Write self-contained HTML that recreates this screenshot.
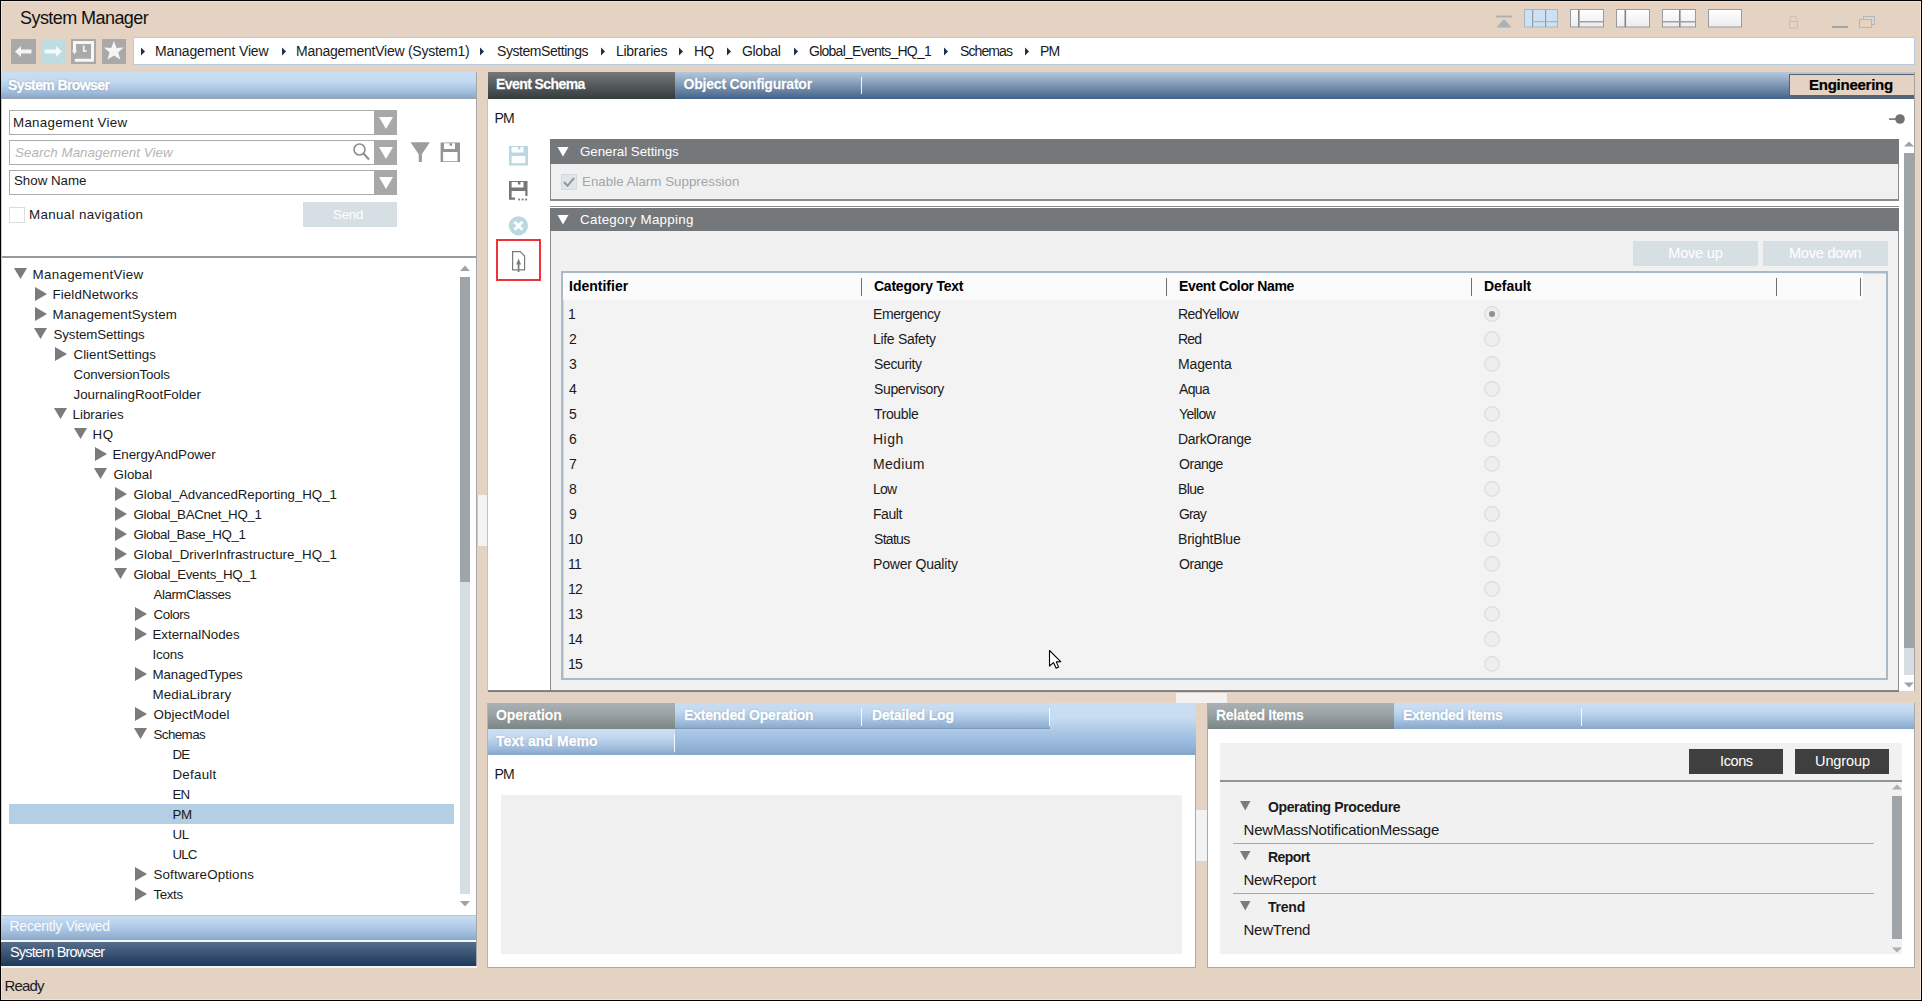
<!DOCTYPE html>
<html><head><meta charset="utf-8"><title>System Manager</title>
<style>
html,body{margin:0;padding:0;width:1922px;height:1001px;overflow:hidden;background:#e4d2c3;}
body{position:relative;font-family:"Liberation Sans",sans-serif;}
.r{position:absolute;display:block;}
.t{position:absolute;white-space:nowrap;line-height:1;}
</style></head><body>
<div class="r" style="left:0px;top:0px;width:1922px;height:1001px;background:#e4d2c3;"></div>
<div class="t" style="left:20.00px;top:8.76px;font-size:18px;font-weight:400;color:#111;letter-spacing:-0.562px;">System Manager</div>
<svg class="r" style="left:1496px;top:15px;" width="16" height="13" viewBox="0 0 16 13"><rect x="0" y="0.5" width="16" height="2" fill="#a9b1b5"/><path d="M8 4 L15.5 12.5 L0.5 12.5 Z" fill="#a9b1b5"/></svg>
<svg class="r" style="left:1524px;top:9px;" width="35" height="19" viewBox="0 0 35 19"><rect x="0.5" y="0.5" width="33" height="17.5" fill="#cde1f3" stroke="#a9b6c2"/><rect x="8" y="1" width="1.2" height="17" fill="#8f9ca6"/><rect x="21" y="1" width="1.2" height="17" fill="#8f9ca6"/><rect x="8" y="12" width="26" height="1.3" fill="#a8b4be"/></svg>
<svg class="r" style="left:1570px;top:9px;" width="35" height="19" viewBox="0 0 35 19"><defs><linearGradient id="lg2" x1="0" y1="0" x2="0" y2="1"><stop offset="0" stop-color="#ffffff"/><stop offset="1" stop-color="#ecebf0"/></linearGradient></defs><rect x="0.5" y="0.5" width="33" height="17.5" fill="url(#lg2)" stroke="#9b9b9b"/><rect x="8" y="1" width="1.6" height="17" fill="#858585"/><rect x="8" y="12" width="26" height="1.5" fill="#a0a0a0"/></svg>
<svg class="r" style="left:1616px;top:9px;" width="35" height="19" viewBox="0 0 35 19"><defs><linearGradient id="lg3" x1="0" y1="0" x2="0" y2="1"><stop offset="0" stop-color="#ffffff"/><stop offset="1" stop-color="#ecebf0"/></linearGradient></defs><rect x="0.5" y="0.5" width="33" height="17.5" fill="url(#lg3)" stroke="#9b9b9b"/><rect x="8.5" y="1" width="1.6" height="17" fill="#858585"/></svg>
<svg class="r" style="left:1662px;top:9px;" width="35" height="19" viewBox="0 0 35 19"><defs><linearGradient id="lg4" x1="0" y1="0" x2="0" y2="1"><stop offset="0" stop-color="#ffffff"/><stop offset="1" stop-color="#ecebf0"/></linearGradient></defs><rect x="0.5" y="0.5" width="33" height="17.5" fill="url(#lg4)" stroke="#9b9b9b"/><rect x="17" y="1" width="1.6" height="17" fill="#858585"/><rect x="1" y="12" width="33" height="1.5" fill="#a0a0a0"/></svg>
<svg class="r" style="left:1708px;top:9px;" width="35" height="19" viewBox="0 0 35 19"><defs><linearGradient id="lg5" x1="0" y1="0" x2="0" y2="1"><stop offset="0" stop-color="#ffffff"/><stop offset="1" stop-color="#ecebf0"/></linearGradient></defs><rect x="0.5" y="0.5" width="33" height="17.5" fill="url(#lg5)" stroke="#9b9b9b"/></svg>
<svg class="r" style="left:1788px;top:15px;" width="11" height="14" viewBox="0 0 11 14"><path d="M2 6 V4.5 A3.5 3.5 0 0 1 9 4.5 V6" fill="none" stroke="#c9bdb4" stroke-width="1"/><rect x="1.5" y="6.5" width="8" height="6.5" fill="none" stroke="#c9bdb4"/></svg>
<div class="r" style="left:1832px;top:26px;width:16px;height:2px;background:#9ca7ab;"></div>
<svg class="r" style="left:1859px;top:15px;" width="17" height="14" viewBox="0 0 17 14"><rect x="4.5" y="1.5" width="11" height="8" fill="none" stroke="#b0b8bc"/><rect x="0.5" y="4.5" width="12" height="8" fill="#e4d2c3" stroke="#b0b8bc"/></svg>
<div class="r" style="left:11px;top:39px;width:25px;height:25px;background:#a9a9a9;"></div>
<svg class="r" style="left:11px;top:39px;" width="25" height="25" viewBox="0 0 25 25"><path d="M4 12.5 L10 7 V10.5 H20.5 V14.5 H10 V18 Z" fill="#f4f4f4"/></svg>
<div class="r" style="left:41px;top:39px;width:25px;height:25px;background:#bfdce3;"></div>
<svg class="r" style="left:41px;top:39px;" width="25" height="25" viewBox="0 0 25 25"><path d="M21 12.5 L15 7 V10.5 H3.5 V14.5 H15 V18 Z" fill="#f4f8f9"/></svg>
<div class="r" style="left:71px;top:39px;width:25px;height:25px;background:#a9a9a9;"></div>
<svg class="r" style="left:71px;top:39px;" width="25" height="25" viewBox="0 0 25 25"><path d="M2 2 H23 V22.8 H3.8 V19.8 H20 V5 H5 V11.5 H2 Z" fill="#f6f6f6"/><path d="M0.9 11.3 L3.5 15.2 L6.1 11.3 Z" fill="#f6f6f6"/><rect x="11.9" y="6.6" width="1.6" height="6" fill="#f6f6f6"/><rect x="11.9" y="11.2" width="3.7" height="1.7" fill="#f6f6f6"/></svg>
<div class="r" style="left:102px;top:39px;width:24px;height:25px;background:#a9a9a9;"></div>
<svg class="r" style="left:102px;top:39px;" width="24" height="25" viewBox="0 0 24 25"><path d="M11.9 2.1 L14.6 9 L21.6 8.6 L16.2 13.6 L18.3 20.4 L11.9 16.5 L5.5 20.4 L7.6 13.6 L1.9 8.6 L9.2 9 Z" fill="#f6f6f6"/></svg>
<div class="r" style="left:133px;top:37px;width:1782px;height:28px;background:#fff;border:1px solid #b6cbe0;box-sizing:border-box;"></div>
<svg class="r" style="left:140px;top:47px;" width="6" height="9" viewBox="0 0 6 9"><path d="M1 0.5 L5 4.5 L1 8.5 Z" fill="#1d2d48"/></svg>
<div class="t" style="left:155.00px;top:44.14px;font-size:14.01px;font-weight:400;color:#1a1a1a;letter-spacing:-0.149px;">Management View</div>
<svg class="r" style="left:281px;top:47px;" width="6" height="9" viewBox="0 0 6 9"><path d="M1 0.5 L5 4.5 L1 8.5 Z" fill="#1d2d48"/></svg>
<div class="t" style="left:296.00px;top:44.14px;font-size:14.01px;font-weight:400;color:#1a1a1a;letter-spacing:-0.253px;">ManagementView (System1)</div>
<svg class="r" style="left:479px;top:47px;" width="6" height="9" viewBox="0 0 6 9"><path d="M1 0.5 L5 4.5 L1 8.5 Z" fill="#1d2d48"/></svg>
<div class="t" style="left:497.00px;top:44.14px;font-size:14.01px;font-weight:400;color:#1a1a1a;letter-spacing:-0.443px;">SystemSettings</div>
<svg class="r" style="left:600px;top:47px;" width="6" height="9" viewBox="0 0 6 9"><path d="M1 0.5 L5 4.5 L1 8.5 Z" fill="#1d2d48"/></svg>
<div class="t" style="left:616.00px;top:44.14px;font-size:14.01px;font-weight:400;color:#1a1a1a;letter-spacing:-0.274px;">Libraries</div>
<svg class="r" style="left:678px;top:47px;" width="6" height="9" viewBox="0 0 6 9"><path d="M1 0.5 L5 4.5 L1 8.5 Z" fill="#1d2d48"/></svg>
<div class="t" style="left:694.00px;top:44.14px;font-size:14.01px;font-weight:400;color:#1a1a1a;letter-spacing:-0.610px;">HQ</div>
<svg class="r" style="left:726px;top:47px;" width="6" height="9" viewBox="0 0 6 9"><path d="M1 0.5 L5 4.5 L1 8.5 Z" fill="#1d2d48"/></svg>
<div class="t" style="left:742.00px;top:44.14px;font-size:14.01px;font-weight:400;color:#1a1a1a;letter-spacing:-0.332px;">Global</div>
<svg class="r" style="left:793px;top:47px;" width="6" height="9" viewBox="0 0 6 9"><path d="M1 0.5 L5 4.5 L1 8.5 Z" fill="#1d2d48"/></svg>
<div class="t" style="left:809.00px;top:44.14px;font-size:14.01px;font-weight:400;color:#1a1a1a;letter-spacing:-0.743px;">Global_Events_HQ_1</div>
<svg class="r" style="left:943px;top:47px;" width="6" height="9" viewBox="0 0 6 9"><path d="M1 0.5 L5 4.5 L1 8.5 Z" fill="#1d2d48"/></svg>
<div class="t" style="left:960.00px;top:44.14px;font-size:14.01px;font-weight:400;color:#1a1a1a;letter-spacing:-0.900px;">Schemas</div>
<svg class="r" style="left:1024px;top:47px;" width="6" height="9" viewBox="0 0 6 9"><path d="M1 0.5 L5 4.5 L1 8.5 Z" fill="#1d2d48"/></svg>
<div class="t" style="left:1040.00px;top:44.14px;font-size:14.01px;font-weight:400;color:#1a1a1a;letter-spacing:-0.838px;">PM</div>
<!--LEFT-->
<div class="r" style="left:1px;top:72px;width:476px;height:26px;background:linear-gradient(#cadef3 0%,#c4d9ef 35%,#a2bfdf 75%,#88a6c8 100%);"></div>
<div class="r" style="left:1px;top:98px;width:476px;height:1px;background:#9aa4ad;"></div>
<div class="t" style="left:8.00px;top:78.14px;font-size:14px;font-weight:700;color:#fff;letter-spacing:-0.598px;text-shadow:0 0 1.5px #3d5d84;-webkit-text-stroke:0.45px #fff;">System Browser</div>
<div class="r" style="left:1px;top:99px;width:475px;height:816px;background:#fff;"></div>
<div class="r" style="left:1px;top:99px;width:1px;height:816px;background:#c8c8c8;"></div>
<div class="r" style="left:476px;top:72px;width:1px;height:896px;background:#a7a7a7;"></div>
<div class="r" style="left:9px;top:110px;width:388px;height:25px;background:#fff;border:1px solid #acacac;box-sizing:border-box;"></div>
<div class="r" style="left:374px;top:110px;width:23px;height:25px;background:#a8a8a8;"></div>
<svg class="r" style="left:373.5px;top:110px;" width="24" height="25" viewBox="0 0 24 25"><path d="M5 7 L19 7 L12 19 Z" fill="#fff"/></svg>
<div class="t" style="left:13.00px;top:115.71px;font-size:13.33px;font-weight:400;color:#1a1a1a;letter-spacing:0.284px;">Management View</div>
<div class="r" style="left:9px;top:140px;width:388px;height:25px;background:#fff;border:1px solid #acacac;box-sizing:border-box;"></div>
<div class="r" style="left:374px;top:140px;width:23px;height:25px;background:#a8a8a8;"></div>
<svg class="r" style="left:373.5px;top:140px;" width="24" height="25" viewBox="0 0 24 25"><path d="M5 7 L19 7 L12 19 Z" fill="#fff"/></svg>
<div class="t" style="left:15.00px;top:145.71px;font-size:13.33px;font-weight:400;color:#b5b5b5;letter-spacing:0.074px;font-style:italic;">Search Management View</div>
<svg class="r" style="left:352px;top:142px;" width="19" height="20" viewBox="0 0 19 20"><circle cx="7.5" cy="7.5" r="5.5" fill="none" stroke="#8e8e8e" stroke-width="1.6"/><path d="M11.5 11.5 L17 17.5" stroke="#8e8e8e" stroke-width="2"/></svg>
<div class="r" style="left:9px;top:170px;width:388px;height:25px;background:#fff;border:1px solid #acacac;box-sizing:border-box;"></div>
<div class="r" style="left:374px;top:170px;width:23px;height:25px;background:#a8a8a8;"></div>
<svg class="r" style="left:373.5px;top:170px;" width="24" height="25" viewBox="0 0 24 25"><path d="M5 7 L19 7 L12 19 Z" fill="#fff"/></svg>
<div class="t" style="left:14.00px;top:174.21px;font-size:13.33px;font-weight:400;color:#1a1a1a;letter-spacing:-0.023px;">Show Name</div>
<svg class="r" style="left:410px;top:142px;" width="21" height="21" viewBox="0 0 21 21"><path d="M0.5 0.2 H19.8 L11.9 12.3 V19.9 H8.7 V12.3 Z" fill="#9c9c9c"/></svg>
<svg class="r" style="left:440px;top:142px;" width="21" height="21" viewBox="0 0 21 21"><path fill-rule="evenodd" fill="#949494" d="M0.6 0.4 H20 V19.9 H0.6 Z M4 1.2 H15 V7.1 H4 Z M3.1 9.9 H17.5 V19.3 H3.1 Z"/><rect x="9.5" y="1.2" width="2.7" height="2.5" fill="#949494"/></svg>
<div class="r" style="left:9px;top:207px;width:16px;height:16px;background:#fff;border:1px solid #dcdcdc;box-sizing:border-box;"></div>
<div class="t" style="left:29.00px;top:207.71px;font-size:13.33px;font-weight:400;color:#1a1a1a;letter-spacing:0.358px;">Manual navigation</div>
<div class="r" style="left:303px;top:202px;width:94px;height:25px;background:#d6e0e4;"></div>
<div class="t" style="left:333.00px;top:207.71px;font-size:13.33px;font-weight:400;color:#fff;letter-spacing:-0.238px;">Send</div>
<div class="r" style="left:2px;top:256px;width:474px;height:2px;background:#959ca1;"></div>
<svg class="r" style="left:14px;top:268px;" width="13" height="11" viewBox="0 0 13 11"><path d="M0 0 H13 L6.5 11 Z" fill="#7b7b7b"/></svg>
<div class="t" style="left:32.50px;top:267.71px;font-size:13.33px;font-weight:400;color:#1a1a1a;letter-spacing:0.322px;">ManagementView</div>
<svg class="r" style="left:35px;top:287px;" width="12" height="14" viewBox="0 0 12 14"><path d="M0 0 V14 L12 7 Z" fill="#7b7b7b"/></svg>
<div class="t" style="left:52.50px;top:287.71px;font-size:13.33px;font-weight:400;color:#1a1a1a;letter-spacing:0.103px;">FieldNetworks</div>
<svg class="r" style="left:35px;top:307px;" width="12" height="14" viewBox="0 0 12 14"><path d="M0 0 V14 L12 7 Z" fill="#7b7b7b"/></svg>
<div class="t" style="left:52.50px;top:307.71px;font-size:13.33px;font-weight:400;color:#1a1a1a;letter-spacing:0.145px;">ManagementSystem</div>
<svg class="r" style="left:34px;top:328px;" width="13" height="11" viewBox="0 0 13 11"><path d="M0 0 H13 L6.5 11 Z" fill="#7b7b7b"/></svg>
<div class="t" style="left:53.50px;top:327.71px;font-size:13.33px;font-weight:400;color:#1a1a1a;letter-spacing:-0.110px;">SystemSettings</div>
<svg class="r" style="left:55px;top:347px;" width="12" height="14" viewBox="0 0 12 14"><path d="M0 0 V14 L12 7 Z" fill="#7b7b7b"/></svg>
<div class="t" style="left:73.50px;top:347.71px;font-size:13.33px;font-weight:400;color:#1a1a1a;letter-spacing:0.018px;">ClientSettings</div>
<div class="t" style="left:73.50px;top:367.71px;font-size:13.33px;font-weight:400;color:#1a1a1a;letter-spacing:-0.148px;">ConversionTools</div>
<div class="t" style="left:73.50px;top:387.71px;font-size:13.33px;font-weight:400;color:#1a1a1a;letter-spacing:0.000px;">JournalingRootFolder</div>
<svg class="r" style="left:54px;top:408px;" width="13" height="11" viewBox="0 0 13 11"><path d="M0 0 H13 L6.5 11 Z" fill="#7b7b7b"/></svg>
<div class="t" style="left:72.50px;top:407.71px;font-size:13.33px;font-weight:400;color:#1a1a1a;letter-spacing:0.006px;">Libraries</div>
<svg class="r" style="left:74px;top:428px;" width="13" height="11" viewBox="0 0 13 11"><path d="M0 0 H13 L6.5 11 Z" fill="#7b7b7b"/></svg>
<div class="t" style="left:92.50px;top:427.71px;font-size:13.33px;font-weight:400;color:#1a1a1a;letter-spacing:0.600px;">HQ</div>
<svg class="r" style="left:95px;top:447px;" width="12" height="14" viewBox="0 0 12 14"><path d="M0 0 V14 L12 7 Z" fill="#7b7b7b"/></svg>
<div class="t" style="left:112.50px;top:447.71px;font-size:13.33px;font-weight:400;color:#1a1a1a;letter-spacing:-0.045px;">EnergyAndPower</div>
<svg class="r" style="left:94px;top:468px;" width="13" height="11" viewBox="0 0 13 11"><path d="M0 0 H13 L6.5 11 Z" fill="#7b7b7b"/></svg>
<div class="t" style="left:113.50px;top:467.71px;font-size:13.33px;font-weight:400;color:#1a1a1a;letter-spacing:0.027px;">Global</div>
<svg class="r" style="left:115px;top:487px;" width="12" height="14" viewBox="0 0 12 14"><path d="M0 0 V14 L12 7 Z" fill="#7b7b7b"/></svg>
<div class="t" style="left:133.50px;top:487.71px;font-size:13.33px;font-weight:400;color:#1a1a1a;letter-spacing:-0.065px;">Global_AdvancedReporting_HQ_1</div>
<svg class="r" style="left:115px;top:507px;" width="12" height="14" viewBox="0 0 12 14"><path d="M0 0 V14 L12 7 Z" fill="#7b7b7b"/></svg>
<div class="t" style="left:133.50px;top:507.71px;font-size:13.33px;font-weight:400;color:#1a1a1a;letter-spacing:-0.335px;">Global_BACnet_HQ_1</div>
<svg class="r" style="left:115px;top:527px;" width="12" height="14" viewBox="0 0 12 14"><path d="M0 0 V14 L12 7 Z" fill="#7b7b7b"/></svg>
<div class="t" style="left:133.50px;top:527.71px;font-size:13.33px;font-weight:400;color:#1a1a1a;letter-spacing:-0.409px;">Global_Base_HQ_1</div>
<svg class="r" style="left:115px;top:547px;" width="12" height="14" viewBox="0 0 12 14"><path d="M0 0 V14 L12 7 Z" fill="#7b7b7b"/></svg>
<div class="t" style="left:133.50px;top:547.71px;font-size:13.33px;font-weight:400;color:#1a1a1a;letter-spacing:0.038px;">Global_DriverInfrastructure_HQ_1</div>
<svg class="r" style="left:114px;top:568px;" width="13" height="11" viewBox="0 0 13 11"><path d="M0 0 H13 L6.5 11 Z" fill="#7b7b7b"/></svg>
<div class="t" style="left:133.50px;top:567.71px;font-size:13.33px;font-weight:400;color:#1a1a1a;letter-spacing:-0.324px;">Global_Events_HQ_1</div>
<div class="t" style="left:153.50px;top:587.71px;font-size:13.33px;font-weight:400;color:#1a1a1a;letter-spacing:-0.413px;">AlarmClasses</div>
<svg class="r" style="left:135px;top:607px;" width="12" height="14" viewBox="0 0 12 14"><path d="M0 0 V14 L12 7 Z" fill="#7b7b7b"/></svg>
<div class="t" style="left:153.50px;top:607.71px;font-size:13.33px;font-weight:400;color:#1a1a1a;letter-spacing:-0.430px;">Colors</div>
<svg class="r" style="left:135px;top:627px;" width="12" height="14" viewBox="0 0 12 14"><path d="M0 0 V14 L12 7 Z" fill="#7b7b7b"/></svg>
<div class="t" style="left:152.50px;top:627.71px;font-size:13.33px;font-weight:400;color:#1a1a1a;letter-spacing:-0.030px;">ExternalNodes</div>
<div class="t" style="left:152.50px;top:647.71px;font-size:13.33px;font-weight:400;color:#1a1a1a;letter-spacing:-0.198px;">Icons</div>
<svg class="r" style="left:135px;top:667px;" width="12" height="14" viewBox="0 0 12 14"><path d="M0 0 V14 L12 7 Z" fill="#7b7b7b"/></svg>
<div class="t" style="left:152.50px;top:667.71px;font-size:13.33px;font-weight:400;color:#1a1a1a;letter-spacing:-0.088px;">ManagedTypes</div>
<div class="t" style="left:152.50px;top:687.71px;font-size:13.33px;font-weight:400;color:#1a1a1a;letter-spacing:0.148px;">MediaLibrary</div>
<svg class="r" style="left:135px;top:707px;" width="12" height="14" viewBox="0 0 12 14"><path d="M0 0 V14 L12 7 Z" fill="#7b7b7b"/></svg>
<div class="t" style="left:153.50px;top:707.71px;font-size:13.33px;font-weight:400;color:#1a1a1a;letter-spacing:0.114px;">ObjectModel</div>
<svg class="r" style="left:134px;top:728px;" width="13" height="11" viewBox="0 0 13 11"><path d="M0 0 H13 L6.5 11 Z" fill="#7b7b7b"/></svg>
<div class="t" style="left:153.50px;top:727.71px;font-size:13.33px;font-weight:400;color:#1a1a1a;letter-spacing:-0.566px;">Schemas</div>
<div class="t" style="left:172.50px;top:747.71px;font-size:13.33px;font-weight:400;color:#1a1a1a;letter-spacing:-0.900px;">DE</div>
<div class="t" style="left:172.50px;top:767.71px;font-size:13.33px;font-weight:400;color:#1a1a1a;letter-spacing:0.246px;">Default</div>
<div class="t" style="left:172.50px;top:787.71px;font-size:13.33px;font-weight:400;color:#1a1a1a;letter-spacing:-0.790px;">EN</div>
<div class="r" style="left:9px;top:804px;width:445px;height:20px;background:#b4cee3;"></div>
<div class="t" style="left:172.50px;top:807.71px;font-size:13.33px;font-weight:400;color:#1a1a1a;letter-spacing:-0.390px;">PM</div>
<div class="t" style="left:172.50px;top:827.71px;font-size:13.33px;font-weight:400;color:#1a1a1a;letter-spacing:-0.325px;">UL</div>
<div class="t" style="left:172.50px;top:847.71px;font-size:13.33px;font-weight:400;color:#1a1a1a;letter-spacing:-0.900px;">ULC</div>
<svg class="r" style="left:135px;top:867px;" width="12" height="14" viewBox="0 0 12 14"><path d="M0 0 V14 L12 7 Z" fill="#7b7b7b"/></svg>
<div class="t" style="left:153.50px;top:867.71px;font-size:13.33px;font-weight:400;color:#1a1a1a;letter-spacing:0.131px;">SoftwareOptions</div>
<svg class="r" style="left:135px;top:887px;" width="12" height="14" viewBox="0 0 12 14"><path d="M0 0 V14 L12 7 Z" fill="#7b7b7b"/></svg>
<div class="t" style="left:153.50px;top:887.71px;font-size:13.33px;font-weight:400;color:#1a1a1a;letter-spacing:-0.386px;">Texts</div>
<svg class="r" style="left:460px;top:265px;" width="10" height="6" viewBox="0 0 10 6"><path d="M0 6 L5 0.5 L10 6 Z" fill="#9da3a6"/></svg>
<div class="r" style="left:460px;top:277px;width:10px;height:305px;background:#9ea4a7;"></div>
<div class="r" style="left:460px;top:582px;width:10px;height:312px;background:#d5dfe3;"></div>
<svg class="r" style="left:460px;top:901px;" width="10" height="6" viewBox="0 0 10 6"><path d="M0 0 L5 5.5 L10 0 Z" fill="#9da3a6"/></svg>
<div class="r" style="left:1px;top:915px;width:475px;height:25px;background:linear-gradient(#cadef3,#a7c3e2 60%,#8aa8ca);border-top:1px solid #b9c6d1;box-sizing:border-box;"></div>
<div class="t" style="left:9.50px;top:918.84px;font-size:14.01px;font-weight:400;color:#f8fbff;letter-spacing:-0.245px;">Recently Viewed</div>
<div class="r" style="left:1px;top:940px;width:475px;height:2px;background:#f6f7f8;"></div>
<div class="r" style="left:1px;top:942px;width:475px;height:24px;background:linear-gradient(#566e8e,#1d385a);"></div>
<div class="t" style="left:10.00px;top:944.92px;font-size:14.5px;font-weight:400;color:#fff;letter-spacing:-0.809px;">System Browser</div>
<div class="r" style="left:1px;top:966px;width:476px;height:2px;background:#f4f4f4;"></div>
<div class="r" style="left:477px;top:495px;width:10px;height:51px;background:#f3f3f3;border-left:1px solid #c8c8c8;box-sizing:border-box;"></div>
<div class="t" style="left:4.50px;top:978.00px;font-size:15px;font-weight:400;color:#1a1a1a;letter-spacing:-0.840px;">Ready</div>
<!--MAIN-->
<div class="r" style="left:488px;top:72px;width:1427px;height:27px;background:linear-gradient(#b5c8dc,#43638a);"></div>
<div class="r" style="left:488px;top:72px;width:187px;height:27px;background:linear-gradient(#73787b,#363b3e);"></div>
<div class="t" style="left:496.00px;top:77.14px;font-size:14px;font-weight:700;color:#fff;letter-spacing:-0.584px;text-shadow:0 0 1px #222;-webkit-text-stroke:0.3px #fff;">Event Schema</div>
<div class="t" style="left:683.50px;top:77.14px;font-size:14px;font-weight:700;color:#fff;letter-spacing:-0.198px;text-shadow:0 0 1px #2c4868;-webkit-text-stroke:0.3px #fff;">Object Configurator</div>
<div class="r" style="left:861px;top:77px;width:1px;height:17px;background:#f2f5f8;"></div>
<div class="r" style="left:1789px;top:74px;width:126px;height:23px;background:#e4d2c3;border:1px solid #59636c;border-bottom-width:2px;box-sizing:border-box;"></div>
<div class="t" style="left:1809.00px;top:77.30px;font-size:15px;font-weight:700;color:#000;letter-spacing:-0.251px;-webkit-text-stroke:0.2px #000;">Engineering</div>
<div class="r" style="left:488px;top:99px;width:1426px;height:592px;background:#fff;"></div>
<div class="r" style="left:1914px;top:72px;width:1px;height:619px;background:#a3a3a3;"></div>
<div class="r" style="left:487px;top:99px;width:1px;height:592px;background:#cdbfb4;"></div>
<div class="t" style="left:494.60px;top:110.74px;font-size:14.01px;font-weight:400;color:#1a1a1a;letter-spacing:-0.838px;">PM</div>
<svg class="r" style="left:1888px;top:113px;" width="18" height="13" viewBox="0 0 18 13"><rect x="1" y="5.3" width="7" height="1.6" fill="#707375"/><circle cx="12" cy="6" r="4.8" fill="#707375"/></svg>
<svg class="r" style="left:509px;top:146px;" width="20" height="20" viewBox="0 0 20 20"><path fill-rule="evenodd" fill="#b9d8e0" d="M0 0 H19 V19.5 H0 Z M2.6 0.9 V6.5 H14.5 V0.9 H11.4 V3.4 H8.9 V0.9 Z M2.6 10 V17.3 H16.3 V10 Z"/></svg>
<svg class="r" style="left:508.7px;top:181px;" width="20" height="20" viewBox="0 0 20 20"><path fill-rule="evenodd" fill="#767676" d="M0 0 H18.5 V15 H16.3 V10 H2.6 V16.6 H6 V18.8 H0 Z M2.6 0.9 V6.5 H14.5 V0.9 H11.4 V3.4 H8.9 V0.9 Z"/><rect x="9.3" y="17.6" width="1.8" height="1.8" fill="#767676"/><rect x="12.8" y="17.6" width="1.8" height="1.8" fill="#767676"/><rect x="16.3" y="17.6" width="1.8" height="1.8" fill="#767676"/></svg>
<svg class="r" style="left:508px;top:216px;" width="21" height="21" viewBox="0 0 21 21"><circle cx="10.4" cy="9.8" r="9.6" fill="#b9d8e0"/><path d="M6.4 5.8 L14.4 13.8 M14.4 5.8 L6.4 13.8" stroke="#fff" stroke-width="3"/></svg>
<div class="r" style="left:496px;top:239px;width:45px;height:42px;border:2px solid #ee3338;box-sizing:border-box;"></div>
<svg class="r" style="left:511px;top:250px;" width="16" height="23" viewBox="0 0 16 23"><path d="M1.6 1.6 H9.2 L13.6 6 V19.8 H1.6 Z" fill="none" stroke="#7a7a7a" stroke-width="1.2"/><path d="M7.6 22 V13" stroke="#7a7a7a" stroke-width="1.7"/><path d="M5.2 14.6 L7.6 8.6 L10 14.6 Z" fill="#7a7a7a"/></svg>
<div class="r" style="left:550px;top:139px;width:1349px;height:25px;background:#74787b;"></div>
<svg class="r" style="left:557px;top:147px;" width="12" height="10" viewBox="0 0 12 10"><path d="M0.5 0 H11.5 L6 9.5 Z" fill="#fff"/></svg>
<div class="t" style="left:580.00px;top:144.71px;font-size:13.33px;font-weight:400;color:#fff;letter-spacing:-0.041px;">General Settings</div>
<div class="r" style="left:550px;top:164px;width:1349px;height:37px;background:#f0f0f0;border:1px solid #8c8c8c;border-top:none;border-bottom-width:2px;box-sizing:border-box;"></div>
<div class="r" style="left:561px;top:174px;width:16px;height:16px;background:#dfe5e8;border:1px solid #d3dade;box-sizing:border-box;"></div>
<svg class="r" style="left:561px;top:174px;" width="16" height="16" viewBox="0 0 16 16"><path d="M3 8 L6.5 11.8 L13 4" fill="none" stroke="#8f9aa0" stroke-width="2"/></svg>
<div class="t" style="left:582.00px;top:174.71px;font-size:13.33px;font-weight:400;color:#a2a6a8;letter-spacing:0.013px;">Enable Alarm Suppression</div>
<div class="r" style="left:550px;top:206px;width:1349px;height:1px;background:#8c8c8c;"></div>
<div class="r" style="left:550px;top:208px;width:1349px;height:23px;background:#74787b;"></div>
<svg class="r" style="left:557px;top:215px;" width="12" height="10" viewBox="0 0 12 10"><path d="M0.5 0 H11.5 L6 9.5 Z" fill="#fff"/></svg>
<div class="t" style="left:580.00px;top:212.71px;font-size:13.33px;font-weight:400;color:#fff;letter-spacing:0.300px;">Category Mapping</div>
<div class="r" style="left:550px;top:231px;width:1349px;height:460px;background:#f1f1f1;border-left:1px solid #8c8c8c;border-right:1px solid #8c8c8c;box-sizing:border-box;"></div>
<div class="r" style="left:1633px;top:241px;width:125px;height:25px;background:#d6e0e4;"></div>
<div class="t" style="left:1668.30px;top:245.52px;font-size:14.5px;font-weight:400;color:#fff;letter-spacing:-0.192px;">Move up</div>
<div class="r" style="left:1763px;top:241px;width:125px;height:25px;background:#d6e0e4;"></div>
<div class="t" style="left:1789.00px;top:245.52px;font-size:14.5px;font-weight:400;color:#fff;letter-spacing:-0.211px;">Move down</div>
<div class="r" style="left:561px;top:271px;width:1327px;height:409px;background:#f3f3f3;border:2px solid #a9b9c6;box-shadow:inset 1px 1px 0 #cfd9e1;box-sizing:border-box;"></div>
<div class="r" style="left:563px;top:273px;width:1300px;height:27px;background:#fbfbfb;"></div>
<div class="r" style="left:861px;top:278px;width:1px;height:18px;background:#6f6f6f;"></div>
<div class="r" style="left:1166px;top:278px;width:1px;height:18px;background:#6f6f6f;"></div>
<div class="r" style="left:1471px;top:278px;width:1px;height:18px;background:#6f6f6f;"></div>
<div class="r" style="left:1776px;top:278px;width:1px;height:18px;background:#6f6f6f;"></div>
<div class="r" style="left:1860px;top:278px;width:1px;height:18px;background:#6f6f6f;"></div>
<div class="t" style="left:569.00px;top:279.14px;font-size:14px;font-weight:700;color:#000;letter-spacing:0.003px;">Identifier</div>
<div class="t" style="left:874.00px;top:279.14px;font-size:14px;font-weight:700;color:#000;letter-spacing:-0.238px;">Category Text</div>
<div class="t" style="left:1179.00px;top:279.14px;font-size:14px;font-weight:700;color:#000;letter-spacing:-0.353px;">Event Color Name</div>
<div class="t" style="left:1484.00px;top:279.14px;font-size:14px;font-weight:700;color:#000;letter-spacing:-0.031px;">Default</div>
<div class="t" style="left:568.00px;top:307.14px;font-size:14.01px;font-weight:400;color:#1a1a1a;letter-spacing:0.000px;">1</div>
<div class="t" style="left:873.00px;top:307.14px;font-size:14.01px;font-weight:400;color:#1a1a1a;letter-spacing:-0.401px;">Emergency</div>
<div class="t" style="left:1178.00px;top:307.14px;font-size:14.01px;font-weight:400;color:#1a1a1a;letter-spacing:-0.603px;">RedYellow</div>
<svg class="r" style="left:1484px;top:306px;" width="16" height="16" viewBox="0 0 16 16"><circle cx="8" cy="8" r="7.3" fill="#eeeeee" stroke="#d9dddf" stroke-width="1.2"/><circle cx="8" cy="8" r="3" fill="#8d9396"/></svg>
<div class="t" style="left:569.00px;top:332.14px;font-size:14.01px;font-weight:400;color:#1a1a1a;letter-spacing:0.000px;">2</div>
<div class="t" style="left:873.00px;top:332.14px;font-size:14.01px;font-weight:400;color:#1a1a1a;letter-spacing:-0.315px;">Life Safety</div>
<div class="t" style="left:1178.00px;top:332.14px;font-size:14.01px;font-weight:400;color:#1a1a1a;letter-spacing:-0.798px;">Red</div>
<svg class="r" style="left:1484px;top:331px;" width="16" height="16" viewBox="0 0 16 16"><circle cx="8" cy="8" r="7.3" fill="#eeeeee" stroke="#d9dddf" stroke-width="1.2"/></svg>
<div class="t" style="left:569.00px;top:357.14px;font-size:14.01px;font-weight:400;color:#1a1a1a;letter-spacing:0.000px;">3</div>
<div class="t" style="left:874.00px;top:357.14px;font-size:14.01px;font-weight:400;color:#1a1a1a;letter-spacing:-0.367px;">Security</div>
<div class="t" style="left:1178.00px;top:357.14px;font-size:14.01px;font-weight:400;color:#1a1a1a;letter-spacing:-0.133px;">Magenta</div>
<svg class="r" style="left:1484px;top:356px;" width="16" height="16" viewBox="0 0 16 16"><circle cx="8" cy="8" r="7.3" fill="#eeeeee" stroke="#d9dddf" stroke-width="1.2"/></svg>
<div class="t" style="left:569.00px;top:382.14px;font-size:14.01px;font-weight:400;color:#1a1a1a;letter-spacing:0.000px;">4</div>
<div class="t" style="left:874.00px;top:382.14px;font-size:14.01px;font-weight:400;color:#1a1a1a;letter-spacing:-0.362px;">Supervisory</div>
<div class="t" style="left:1179.00px;top:382.14px;font-size:14.01px;font-weight:400;color:#1a1a1a;letter-spacing:-0.637px;">Aqua</div>
<svg class="r" style="left:1484px;top:381px;" width="16" height="16" viewBox="0 0 16 16"><circle cx="8" cy="8" r="7.3" fill="#eeeeee" stroke="#d9dddf" stroke-width="1.2"/></svg>
<div class="t" style="left:569.00px;top:407.14px;font-size:14.01px;font-weight:400;color:#1a1a1a;letter-spacing:0.000px;">5</div>
<div class="t" style="left:874.00px;top:407.14px;font-size:14.01px;font-weight:400;color:#1a1a1a;letter-spacing:-0.377px;">Trouble</div>
<div class="t" style="left:1179.00px;top:407.14px;font-size:14.01px;font-weight:400;color:#1a1a1a;letter-spacing:-0.669px;">Yellow</div>
<svg class="r" style="left:1484px;top:406px;" width="16" height="16" viewBox="0 0 16 16"><circle cx="8" cy="8" r="7.3" fill="#eeeeee" stroke="#d9dddf" stroke-width="1.2"/></svg>
<div class="t" style="left:569.00px;top:432.14px;font-size:14.01px;font-weight:400;color:#1a1a1a;letter-spacing:0.000px;">6</div>
<div class="t" style="left:873.00px;top:432.14px;font-size:14.01px;font-weight:400;color:#1a1a1a;letter-spacing:0.498px;">High</div>
<div class="t" style="left:1178.00px;top:432.14px;font-size:14.01px;font-weight:400;color:#1a1a1a;letter-spacing:-0.297px;">DarkOrange</div>
<svg class="r" style="left:1484px;top:431px;" width="16" height="16" viewBox="0 0 16 16"><circle cx="8" cy="8" r="7.3" fill="#eeeeee" stroke="#d9dddf" stroke-width="1.2"/></svg>
<div class="t" style="left:569.00px;top:457.14px;font-size:14.01px;font-weight:400;color:#1a1a1a;letter-spacing:0.000px;">7</div>
<div class="t" style="left:873.00px;top:457.14px;font-size:14.01px;font-weight:400;color:#1a1a1a;letter-spacing:0.334px;">Medium</div>
<div class="t" style="left:1179.00px;top:457.14px;font-size:14.01px;font-weight:400;color:#1a1a1a;letter-spacing:-0.462px;">Orange</div>
<svg class="r" style="left:1484px;top:456px;" width="16" height="16" viewBox="0 0 16 16"><circle cx="8" cy="8" r="7.3" fill="#eeeeee" stroke="#d9dddf" stroke-width="1.2"/></svg>
<div class="t" style="left:569.00px;top:482.14px;font-size:14.01px;font-weight:400;color:#1a1a1a;letter-spacing:0.000px;">8</div>
<div class="t" style="left:873.00px;top:482.14px;font-size:14.01px;font-weight:400;color:#1a1a1a;letter-spacing:-0.736px;">Low</div>
<div class="t" style="left:1178.00px;top:482.14px;font-size:14.01px;font-weight:400;color:#1a1a1a;letter-spacing:-0.611px;">Blue</div>
<svg class="r" style="left:1484px;top:481px;" width="16" height="16" viewBox="0 0 16 16"><circle cx="8" cy="8" r="7.3" fill="#eeeeee" stroke="#d9dddf" stroke-width="1.2"/></svg>
<div class="t" style="left:569.00px;top:507.14px;font-size:14.01px;font-weight:400;color:#1a1a1a;letter-spacing:0.000px;">9</div>
<div class="t" style="left:873.00px;top:507.14px;font-size:14.01px;font-weight:400;color:#1a1a1a;letter-spacing:-0.434px;">Fault</div>
<div class="t" style="left:1179.00px;top:507.14px;font-size:14.01px;font-weight:400;color:#1a1a1a;letter-spacing:-0.900px;">Gray</div>
<svg class="r" style="left:1484px;top:506px;" width="16" height="16" viewBox="0 0 16 16"><circle cx="8" cy="8" r="7.3" fill="#eeeeee" stroke="#d9dddf" stroke-width="1.2"/></svg>
<div class="t" style="left:568.00px;top:532.14px;font-size:14.01px;font-weight:400;color:#1a1a1a;letter-spacing:-0.887px;">10</div>
<div class="t" style="left:874.00px;top:532.14px;font-size:14.01px;font-weight:400;color:#1a1a1a;letter-spacing:-0.698px;">Status</div>
<div class="t" style="left:1178.00px;top:532.14px;font-size:14.01px;font-weight:400;color:#1a1a1a;letter-spacing:-0.212px;">BrightBlue</div>
<svg class="r" style="left:1484px;top:531px;" width="16" height="16" viewBox="0 0 16 16"><circle cx="8" cy="8" r="7.3" fill="#eeeeee" stroke="#d9dddf" stroke-width="1.2"/></svg>
<div class="t" style="left:568.00px;top:557.14px;font-size:14.01px;font-weight:400;color:#1a1a1a;letter-spacing:-0.825px;">11</div>
<div class="t" style="left:873.00px;top:557.14px;font-size:14.01px;font-weight:400;color:#1a1a1a;letter-spacing:-0.187px;">Power Quality</div>
<div class="t" style="left:1179.00px;top:557.14px;font-size:14.01px;font-weight:400;color:#1a1a1a;letter-spacing:-0.462px;">Orange</div>
<svg class="r" style="left:1484px;top:556px;" width="16" height="16" viewBox="0 0 16 16"><circle cx="8" cy="8" r="7.3" fill="#eeeeee" stroke="#d9dddf" stroke-width="1.2"/></svg>
<div class="t" style="left:568.00px;top:582.14px;font-size:14.01px;font-weight:400;color:#1a1a1a;letter-spacing:-0.887px;">12</div>
<svg class="r" style="left:1484px;top:581px;" width="16" height="16" viewBox="0 0 16 16"><circle cx="8" cy="8" r="7.3" fill="#eeeeee" stroke="#d9dddf" stroke-width="1.2"/></svg>
<div class="t" style="left:568.00px;top:607.14px;font-size:14.01px;font-weight:400;color:#1a1a1a;letter-spacing:-0.887px;">13</div>
<svg class="r" style="left:1484px;top:606px;" width="16" height="16" viewBox="0 0 16 16"><circle cx="8" cy="8" r="7.3" fill="#eeeeee" stroke="#d9dddf" stroke-width="1.2"/></svg>
<div class="t" style="left:568.00px;top:632.14px;font-size:14.01px;font-weight:400;color:#1a1a1a;letter-spacing:-0.887px;">14</div>
<svg class="r" style="left:1484px;top:631px;" width="16" height="16" viewBox="0 0 16 16"><circle cx="8" cy="8" r="7.3" fill="#eeeeee" stroke="#d9dddf" stroke-width="1.2"/></svg>
<div class="t" style="left:568.00px;top:657.14px;font-size:14.01px;font-weight:400;color:#1a1a1a;letter-spacing:-0.887px;">15</div>
<svg class="r" style="left:1484px;top:656px;" width="16" height="16" viewBox="0 0 16 16"><circle cx="8" cy="8" r="7.3" fill="#eeeeee" stroke="#d9dddf" stroke-width="1.2"/></svg>
<svg class="r" style="left:1904px;top:141px;" width="10" height="6" viewBox="0 0 10 6"><path d="M0 5.5 L5 0.5 L10 5.5 Z" fill="#9da3a6"/></svg>
<div class="r" style="left:1904px;top:153px;width:10px;height:495px;background:#9ea4a7;"></div>
<div class="r" style="left:1904px;top:648px;width:10px;height:27px;background:#d5dfe3;"></div>
<svg class="r" style="left:1904px;top:682px;" width="10" height="6" viewBox="0 0 10 6"><path d="M0 0.5 L5 5.5 L10 0.5 Z" fill="#9da3a6"/></svg>
<div class="r" style="left:488px;top:690px;width:1411px;height:2px;background:linear-gradient(#8a9094,#70767a);"></div>
<div class="r" style="left:1176px;top:693px;width:51px;height:10px;background:#f2f2f2;"></div>
<!--BOTTOM-->
<div class="r" style="left:488px;top:703px;width:708px;height:52px;background:linear-gradient(#cadef3 0%,#c8dcf2 28%,#afcae7 52%,#9bbbe0 74%,#86a5c7 100%);"></div>
<div class="r" style="left:675px;top:703px;width:375px;height:26px;background:linear-gradient(#c9ddf2,#c4d9ef 30%,#a7c3e3 65%,#88a6c7);"></div>
<div class="r" style="left:675px;top:728px;width:375px;height:1px;background:#7d9bbd;"></div>
<div class="r" style="left:488px;top:703px;width:187px;height:26px;background:linear-gradient(#a9b1b4,#9aa2a4 45%,#7a8585);"></div>
<div class="t" style="left:496.00px;top:708.14px;font-size:14px;font-weight:700;color:#fff;letter-spacing:-0.039px;text-shadow:0 0 1px #444;-webkit-text-stroke:0.3px #fff;">Operation</div>
<div class="t" style="left:684.00px;top:708.14px;font-size:14px;font-weight:700;color:#fff;letter-spacing:-0.204px;text-shadow:0 0 1.5px #4f6f95;-webkit-text-stroke:0.45px #fff;">Extended Operation</div>
<div class="r" style="left:861px;top:708px;width:1px;height:18px;background:#f5f8fb;"></div>
<div class="t" style="left:872.00px;top:708.14px;font-size:14px;font-weight:700;color:#fff;letter-spacing:-0.187px;text-shadow:0 0 1.5px #4f6f95;-webkit-text-stroke:0.45px #fff;">Detailed Log</div>
<div class="r" style="left:1049px;top:708px;width:1px;height:18px;background:#f5f8fb;"></div>
<div class="r" style="left:488px;top:729px;width:187px;height:26px;background:linear-gradient(#cadef3,#c4d9ef 30%,#a7c3e3 65%,#88a6c7);"></div>
<div class="t" style="left:496.00px;top:734.14px;font-size:14px;font-weight:700;color:#fff;letter-spacing:0.057px;text-shadow:0 0 1.5px #4f6f95;-webkit-text-stroke:0.45px #fff;">Text and Memo</div>
<div class="r" style="left:674px;top:734px;width:1px;height:18px;background:#f5f8fb;"></div>
<div class="r" style="left:488px;top:755px;width:707px;height:212px;background:#fff;"></div>
<div class="r" style="left:1195px;top:755px;width:1px;height:213px;background:#a9a9a9;"></div>
<div class="r" style="left:487px;top:703px;width:1px;height:265px;background:#b4b4b4;"></div>
<div class="r" style="left:488px;top:967px;width:708px;height:1px;background:#a9a9a9;"></div>
<div class="t" style="left:494.60px;top:766.89px;font-size:14.01px;font-weight:400;color:#1a1a1a;letter-spacing:-0.838px;">PM</div>
<div class="r" style="left:501px;top:795px;width:681px;height:159px;background:#f0f0f0;"></div>
<div class="r" style="left:1196px;top:810px;width:11px;height:51px;background:#f2f2f2;"></div>
<div class="r" style="left:1207px;top:703px;width:707px;height:26px;background:linear-gradient(#cadef3,#c4d9ef 30%,#a7c3e3 65%,#88a6c7);"></div>
<div class="r" style="left:1207px;top:703px;width:187px;height:26px;background:linear-gradient(#a9b1b4,#9aa2a4 45%,#7a8585);"></div>
<div class="t" style="left:1216.00px;top:708.14px;font-size:14px;font-weight:700;color:#fff;letter-spacing:-0.271px;text-shadow:0 0 1px #444;-webkit-text-stroke:0.3px #fff;">Related Items</div>
<div class="t" style="left:1403.00px;top:708.14px;font-size:14px;font-weight:700;color:#fff;letter-spacing:-0.284px;text-shadow:0 0 1.5px #4f6f95;-webkit-text-stroke:0.45px #fff;">Extended Items</div>
<div class="r" style="left:1581px;top:708px;width:1px;height:18px;background:#f5f8fb;"></div>
<div class="r" style="left:1207px;top:729px;width:707px;height:238px;background:#fff;"></div>
<div class="r" style="left:1207px;top:703px;width:1px;height:265px;background:#a9a9a9;"></div>
<div class="r" style="left:1914px;top:703px;width:1px;height:265px;background:#a9a9a9;"></div>
<div class="r" style="left:1207px;top:967px;width:708px;height:1px;background:#a9a9a9;"></div>
<div class="r" style="left:1220px;top:743px;width:682px;height:211px;background:#f1f1f1;"></div>
<div class="r" style="left:1689px;top:749px;width:94px;height:25px;background:#3f3f3f;"></div>
<div class="t" style="left:1720.00px;top:753.52px;font-size:14.5px;font-weight:400;color:#fff;letter-spacing:-0.402px;">Icons</div>
<div class="r" style="left:1795px;top:749px;width:94px;height:25px;background:#3f3f3f;"></div>
<div class="t" style="left:1815.00px;top:753.52px;font-size:14.5px;font-weight:400;color:#fff;letter-spacing:-0.093px;">Ungroup</div>
<div class="r" style="left:1220px;top:780px;width:682px;height:2px;background:#8d9599;"></div>
<svg class="r" style="left:1240px;top:801.0px;" width="11" height="10" viewBox="0 0 11 10"><path d="M0 0 H10.5 L5.25 9.5 Z" fill="#7b7b7b"/></svg>
<div class="t" style="left:1268.00px;top:799.64px;font-size:14px;font-weight:700;color:#1a1a1a;letter-spacing:-0.370px;">Operating Procedure</div>
<div class="t" style="left:1243.50px;top:822.30px;font-size:15px;font-weight:400;color:#1a1a1a;letter-spacing:-0.203px;">NewMassNotificationMessage</div>
<svg class="r" style="left:1240px;top:851.0px;" width="11" height="10" viewBox="0 0 11 10"><path d="M0 0 H10.5 L5.25 9.5 Z" fill="#7b7b7b"/></svg>
<div class="t" style="left:1268.00px;top:849.64px;font-size:14px;font-weight:700;color:#1a1a1a;letter-spacing:-0.590px;">Report</div>
<div class="t" style="left:1243.50px;top:872.30px;font-size:15px;font-weight:400;color:#1a1a1a;letter-spacing:-0.295px;">NewReport</div>
<svg class="r" style="left:1240px;top:901.0px;" width="11" height="10" viewBox="0 0 11 10"><path d="M0 0 H10.5 L5.25 9.5 Z" fill="#7b7b7b"/></svg>
<div class="t" style="left:1268.00px;top:899.64px;font-size:14px;font-weight:700;color:#1a1a1a;letter-spacing:-0.216px;">Trend</div>
<div class="t" style="left:1243.50px;top:922.30px;font-size:15px;font-weight:400;color:#1a1a1a;letter-spacing:-0.242px;">NewTrend</div>
<div class="r" style="left:1233px;top:843px;width:641px;height:1px;background:#a7a7a7;"></div>
<div class="r" style="left:1233px;top:893px;width:641px;height:1px;background:#a7a7a7;"></div>
<svg class="r" style="left:1892px;top:784px;" width="10" height="6" viewBox="0 0 10 6"><path d="M0 5.5 L5 0.5 L10 5.5 Z" fill="#a9aeb1"/></svg>
<div class="r" style="left:1892px;top:796px;width:10px;height:143px;background:#9ea4a7;"></div>
<svg class="r" style="left:1892px;top:947px;" width="10" height="6" viewBox="0 0 10 6"><path d="M0 0.5 L5 5.5 L10 0.5 Z" fill="#a9aeb1"/></svg>
<svg class="r" style="left:1048px;top:649px;" width="15" height="22" viewBox="0 0 15 22"><path d="M1.5 1.5 V17 L5.5 13.6 L8.2 19.3 L10.6 18.1 L8.3 12.9 L12.7 12.7 Z" fill="#fff" stroke="#000" stroke-width="1.1" stroke-linejoin="round"/></svg>
<div class="r" style="left:0px;top:0px;width:1922px;height:1001px;border:1px solid #000;box-sizing:border-box;background:transparent;"></div>
<div class="r" style="left:1px;top:1px;width:1920px;height:1px;background:#f1e2d6;"></div>
<div class="r" style="left:1px;top:1px;width:1px;height:71px;background:#f1e2d6;"></div>
<div class="r" style="left:1px;top:968px;width:1px;height:31px;background:#f1e2d6;"></div>
<div class="r" style="left:1920px;top:1px;width:1px;height:999px;background:#f3e2d5;"></div>
<div class="r" style="left:1px;top:999px;width:1920px;height:1px;background:#f1e2d6;"></div>
<div class="r" style="left:2px;top:6px;width:1918px;height:1px;background:#e6cfbf;"></div>
</body></html>
